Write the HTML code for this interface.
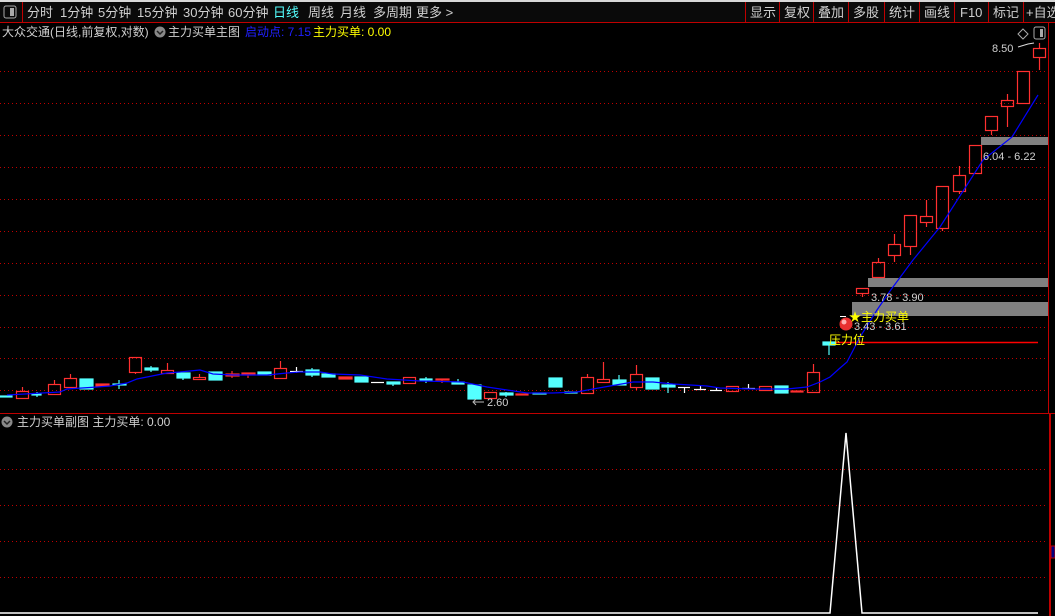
<!DOCTYPE html>
<html><head><meta charset="utf-8"><style>
html,body{margin:0;padding:0;background:#000;width:1055px;height:616px;overflow:hidden}
svg{display:block}
text{font-family:"Liberation Sans","Noto Sans CJK SC",sans-serif}
</style></head><body>
<svg width="1055" height="616" viewBox="0 0 1055 616" xmlns="http://www.w3.org/2000/svg">
<rect width="1055" height="616" fill="#000"/>
<rect width="1055" height="2" fill="#d8d8d8"/>
<rect y="2" width="1055" height="20" fill="#0a0a0a"/>
<line x1="0" y1="22.5" x2="1055" y2="22.5" stroke="#c00000"/>
<rect x="4" y="6" width="12" height="12" rx="2" fill="none" stroke="#aaa"/><rect x="10" y="8" width="4" height="8" fill="#aaa"/>
<line x1="22.5" y1="2" x2="22.5" y2="22" stroke="#c00000"/>
<g font-size="13" fill="#d0d0d0">
<text x="27" y="17">分时</text><text x="60" y="17">1分钟</text><text x="98" y="17">5分钟</text><text x="137" y="17">15分钟</text><text x="183" y="17">30分钟</text><text x="228" y="17">60分钟</text><text x="273" y="17" fill="#54ffff">日线</text><text x="308" y="17">周线</text><text x="340" y="17">月线</text><text x="373" y="17">多周期</text><text x="416" y="17">更多 &gt;</text>
<text x="750" y="17">显示</text><text x="784" y="17">复权</text><text x="818" y="17">叠加</text><text x="853" y="17">多股</text><text x="889" y="17">统计</text><text x="924" y="17">画线</text><text x="960" y="17">F10</text><text x="993" y="17">标记</text><text x="1026" y="17">+自选</text>
</g>
<g stroke="#c00000"><line x1="745.5" y1="2" x2="745.5" y2="22"/><line x1="779.5" y1="2" x2="779.5" y2="22"/><line x1="813.5" y1="2" x2="813.5" y2="22"/><line x1="848.5" y1="2" x2="848.5" y2="22"/><line x1="884.5" y1="2" x2="884.5" y2="22"/><line x1="919.5" y1="2" x2="919.5" y2="22"/><line x1="954.5" y1="2" x2="954.5" y2="22"/><line x1="988.5" y1="2" x2="988.5" y2="22"/><line x1="1023.5" y1="2" x2="1023.5" y2="22"/></g>
<!-- info line -->
<g font-size="12">
<text x="2" y="36" fill="#d0d0d0">大众交通(日线,前复权,对数)</text>
<circle cx="160" cy="32" r="5.5" fill="#888"/><path d="M157 31l3 3 3-3" stroke="#222" stroke-width="1.5" fill="none"/>
<text x="168" y="36" fill="#d0d0d0">主力买单主图</text>
<text x="245" y="36" fill="#2020ff">启动点: 7.15</text>
<text x="313" y="36" fill="#ffff00">主力买单: 0.00</text>
</g>
<path d="M1023 29l5 5-5 5-5-5z" fill="none" stroke="#aaa"/>
<rect x="1034" y="27" width="11" height="12" rx="2" fill="none" stroke="#aaa"/><rect x="1040" y="29" width="3" height="8" fill="#aaa"/>
<!-- grid -->
<g stroke="#c00000" stroke-dasharray="1 3">
<line x1="0" y1="71.5" x2="1046" y2="71.5"/><line x1="0" y1="103.5" x2="1046" y2="103.5"/><line x1="0" y1="135.5" x2="1046" y2="135.5"/><line x1="0" y1="167.5" x2="1046" y2="167.5"/><line x1="0" y1="199.5" x2="1046" y2="199.5"/><line x1="0" y1="231.5" x2="1046" y2="231.5"/><line x1="0" y1="263.5" x2="1046" y2="263.5"/><line x1="0" y1="295.5" x2="1046" y2="295.5"/><line x1="0" y1="327.5" x2="1046" y2="327.5"/><line x1="0" y1="358.5" x2="1046" y2="358.5"/><line x1="0" y1="390.5" x2="1046" y2="390.5"/>
<line x1="0" y1="469.5" x2="1046" y2="469.5"/><line x1="0" y1="505.5" x2="1046" y2="505.5"/><line x1="0" y1="541.5" x2="1046" y2="541.5"/><line x1="0" y1="577.5" x2="1046" y2="577.5"/>
</g>
<line x1="1048.5" y1="23" x2="1048.5" y2="413" stroke="#c00000"/>
<line x1="0" y1="413.5" x2="1055" y2="413.5" stroke="#c00000"/>
<rect x="1049" y="414" width="2" height="202" fill="#c00000"/>
<rect x="1051" y="546" width="4" height="12" fill="#000080" stroke="#c00000"/>
<!-- gray zones -->
<rect x="981" y="137" width="67" height="8" fill="#808080"/>
<rect x="868" y="278" width="180" height="9" fill="#808080"/>
<rect x="852" y="302" width="196" height="14" fill="#808080"/>
<line x1="830" y1="342.5" x2="1038" y2="342.5" stroke="#ff0000" stroke-width="1.5"/>
<!-- candles -->
<g stroke-width="1.2">
<g fill="#54ffff" stroke="#54ffff">
<rect x="0" y="396" width="12" height="1"/>
<rect x="32" y="394" width="9" height="1"/><line x1="37" y1="392" x2="37" y2="397"/>
<rect x="80" y="379" width="13" height="10"/>
<rect x="113" y="384" width="13" height="1"/><line x1="119" y1="380" x2="119" y2="389"/>
<rect x="145" y="368" width="13" height="2"/><line x1="151" y1="366" x2="151" y2="372"/>
<rect x="177" y="373" width="13" height="5"/><line x1="183" y1="378" x2="183" y2="380"/>
<rect x="209" y="372" width="13" height="8"/>
<rect x="258" y="372" width="13" height="3"/>
<rect x="306" y="370" width="13" height="5"/><line x1="312" y1="368" x2="312" y2="377"/>
<rect x="322" y="374" width="13" height="3"/>
<rect x="355" y="377" width="13" height="5"/>
<rect x="387" y="382" width="13" height="2"/><line x1="393" y1="384" x2="393" y2="386"/>
<rect x="420" y="379" width="12" height="1"/><line x1="426" y1="377" x2="426" y2="383"/>
<rect x="452" y="382" width="12" height="2"/><line x1="458" y1="379" x2="458" y2="384"/>
<rect x="468" y="385" width="13" height="14"/>
<rect x="500" y="393" width="13" height="2"/><line x1="506" y1="392" x2="506" y2="397"/>
<rect x="533" y="393" width="13" height="1"/>
<rect x="549" y="378" width="13" height="9"/>
<rect x="565" y="392" width="12" height="1"/>
<rect x="613" y="380" width="13" height="5"/><line x1="619" y1="375" x2="619" y2="380"/>
<rect x="646" y="378" width="13" height="11"/>
<rect x="662" y="385" width="13" height="2"/><line x1="668" y1="382" x2="668" y2="393"/>
<rect x="775" y="386" width="13" height="7"/>
<rect x="823" y="342" width="12" height="3"/><line x1="829" y1="345" x2="829" y2="355"/>
</g>
<g fill="#ff3030" stroke="#ff3030">
<rect x="96" y="384" width="13" height="2"/>
<rect x="226" y="374" width="13" height="2"/><line x1="232" y1="371" x2="232" y2="378"/>
<rect x="242" y="373" width="13" height="2"/><line x1="248" y1="375" x2="248" y2="378"/>
<rect x="339" y="377" width="13" height="2"/>
<rect x="436" y="379" width="13" height="1"/><line x1="442" y1="380" x2="442" y2="383"/>
<rect x="516" y="394" width="12" height="1"/>
<rect x="791" y="391" width="12" height="1"/>
</g>
<g fill="none" stroke="#ff3030">
<rect x="16.5" y="391.5" width="12" height="7"/><line x1="22.5" y1="387" x2="22.5" y2="391"/>
<rect x="48.5" y="384.5" width="12" height="10"/><line x1="54.5" y1="380" x2="54.5" y2="384"/>
<rect x="64.5" y="378.5" width="12" height="9"/><line x1="70.5" y1="374" x2="70.5" y2="378"/>
<rect x="129.5" y="357.5" width="12" height="15"/><line x1="135.5" y1="372" x2="135.5" y2="374"/>
<rect x="161.5" y="370.5" width="12" height="3"/><line x1="167.5" y1="363" x2="167.5" y2="370"/>
<rect x="193.5" y="377.5" width="12" height="2"/><line x1="199.5" y1="374" x2="199.5" y2="377"/>
<rect x="274.5" y="368.5" width="12" height="10"/><line x1="280.5" y1="361" x2="280.5" y2="368"/>
<rect x="403.5" y="377.5" width="12" height="6"/>
<rect x="484.5" y="392.5" width="12" height="6"/>
<rect x="581.5" y="377.5" width="12" height="16"/><line x1="587.5" y1="374" x2="587.5" y2="377"/>
<rect x="597.5" y="379.5" width="12" height="3"/><line x1="603.5" y1="362" x2="603.5" y2="379"/>
<rect x="630.5" y="374.5" width="12" height="13"/><line x1="636.5" y1="365" x2="636.5" y2="374"/><line x1="636.5" y1="388" x2="636.5" y2="390"/>
<rect x="726.5" y="386.5" width="12" height="5"/>
<rect x="759.5" y="386.5" width="12" height="4"/>
<rect x="807.5" y="372.5" width="12" height="20"/><line x1="813.5" y1="364" x2="813.5" y2="372"/>
<rect x="856.5" y="288.5" width="12" height="5"/><line x1="862.5" y1="294" x2="862.5" y2="297"/>
<rect x="872.5" y="262.5" width="12" height="15"/><line x1="878.5" y1="258" x2="878.5" y2="262"/>
<rect x="888.5" y="244.5" width="12" height="11"/><line x1="894.5" y1="234" x2="894.5" y2="244"/><line x1="894.5" y1="256" x2="894.5" y2="262"/>
<rect x="904.5" y="215.5" width="12" height="31"/><line x1="910.5" y1="247" x2="910.5" y2="255"/>
<rect x="920.5" y="216.5" width="12" height="6"/><line x1="926.5" y1="200" x2="926.5" y2="216"/><line x1="926.5" y1="223" x2="926.5" y2="227"/>
<rect x="936.5" y="186.5" width="12" height="42"/><line x1="942.5" y1="229" x2="942.5" y2="231"/>
<rect x="953.5" y="175.5" width="12" height="16"/><line x1="959.5" y1="166" x2="959.5" y2="175"/><line x1="959.5" y1="192" x2="959.5" y2="194"/>
<rect x="969.5" y="145.5" width="12" height="28"/>
<rect x="985.5" y="116.5" width="12" height="14"/><line x1="991.5" y1="131" x2="991.5" y2="135"/>
<rect x="1001.5" y="100.5" width="12" height="6"/><line x1="1007.5" y1="94" x2="1007.5" y2="100"/><line x1="1007.5" y1="107" x2="1007.5" y2="127"/>
<rect x="1017.5" y="71.5" width="12" height="32"/>
<rect x="1033.5" y="48.5" width="12" height="9"/><line x1="1039.5" y1="58" x2="1039.5" y2="70"/><line x1="1039.5" y1="43" x2="1039.5" y2="48"/>
</g>
<g stroke="#fff">
<line x1="290" y1="371.5" x2="303" y2="371.5"/><line x1="296.5" y1="367" x2="296.5" y2="373"/>
<line x1="371" y1="382.5" x2="384" y2="382.5"/>
<line x1="678" y1="387.5" x2="690" y2="387.5"/><line x1="684.5" y1="387" x2="684.5" y2="393"/>
<line x1="694" y1="389.5" x2="706" y2="389.5"/><line x1="700.5" y1="386" x2="700.5" y2="390"/>
<line x1="710" y1="390.5" x2="722" y2="390.5"/><line x1="716.5" y1="387" x2="716.5" y2="390"/>
<line x1="742" y1="388.5" x2="755" y2="388.5"/><line x1="748.5" y1="384" x2="748.5" y2="388"/>
</g>
</g>
<!-- MA -->
<polyline fill="none" stroke="#0000ff" stroke-width="1.2" points="7,395 60,392 67,389 97,387 110,386 127,383 137,379 147,377 167,373 180,372 200,370 213,374 233,375 267,375 287,373 300,372 320,372 333,374 360,375 387,379 420,381 463,382 487,387 507,390 527,393 553,393 577,392 593,389 610,386 633,382 653,382 673,384 707,386 720,388 753,389 787,389 807,387 820,382 830,377 840,368 847,362 860,337 877,310 890,291 913,260 940,227 983,160 1012,137 1038,95"/>
<!-- labels -->
<g font-size="11" fill="#d0d0d0">
<text x="992" y="52">8.50</text>
<text x="983" y="160">6.04 - 6.22</text>
<text x="871" y="301">3.78 - 3.90</text>
<text x="854" y="330">3.43 - 3.61</text>
<text x="487" y="406">2.60</text>
</g>
<path d="M1018 47l10-3 6-1" stroke="#ddd" fill="none"/>
<path d="M474 402h10M476 399l-3 3 3 3" stroke="#bbb" fill="none"/>
<circle cx="846" cy="324" r="6.5" fill="#e83030"/><circle cx="844" cy="322" r="2.5" fill="#ffb0b0"/>
<line x1="840" y1="316.5" x2="846" y2="316.5" stroke="#fff"/>
<text x="849" y="321" font-size="12" fill="#ffff00">★主力买单</text>
<text x="829" y="344" font-size="12" fill="#ffff00">压力位</text>
<!-- lower panel -->
<circle cx="7" cy="422" r="5.5" fill="#888"/><path d="M4 421l3 3 3-3" stroke="#222" stroke-width="1.5" fill="none"/>
<text x="17" y="426" font-size="12" fill="#d0d0d0">主力买单副图 主力买单: 0.00</text>
<polyline fill="none" stroke="#fff" stroke-width="1.5" points="0,613 830,613 846,433 862,613 1038,613"/>
</svg>
</body></html>
